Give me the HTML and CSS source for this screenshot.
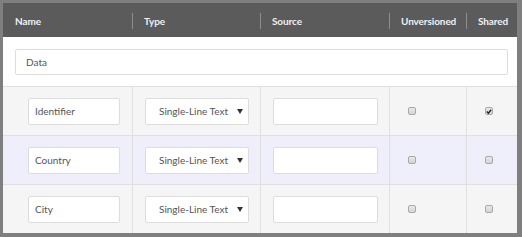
FILE: index.html
```html
<!DOCTYPE html>
<html>
<head>
    <title>Template Fields</title>
    <link rel="stylesheet" href="styles.css">
</head>
<body>
    <div class="fields">
        <div class="head">
            <div class="th">Name</div>
            <div class="th"><span class="sep"></span>Type</div>
            <div class="th"><span class="sep"></span>Source</div>
            <div class="th"><span class="sep"></span>Unversioned</div>
            <div class="th"><span class="sep"></span>Shared</div>
        </div>

        <div class="section">
            <input type="text" class="box section-name" value="Data">
        </div>

        <div class="row">
            <div class="td name"><input type="text" class="box" value="Identifier"></div>
            <div class="td"><div class="box select">Single-Line Text<span class="arrow"></span></div></div>
            <div class="td"><input type="text" class="box" value=""></div>
            <div class="td check"><span class="cb"></span></div>
            <div class="td check"><span class="cb checked"><svg width="7" height="7" viewBox="0 0 7 7"><path d="M1 3.6 L2.8 5.4 L6 1.4" fill="none" stroke="#222" stroke-width="1.6"/></svg></span></div>
        </div>

        <div class="row alt">
            <div class="td name"><input type="text" class="box" value="Country"></div>
            <div class="td"><div class="box select">Single-Line Text<span class="arrow"></span></div></div>
            <div class="td"><input type="text" class="box" value=""></div>
            <div class="td check"><span class="cb"></span></div>
            <div class="td check"><span class="cb"></span></div>
        </div>

        <div class="row">
            <div class="td name"><input type="text" class="box" value="City"></div>
            <div class="td"><div class="box select">Single-Line Text<span class="arrow"></span></div></div>
            <div class="td"><input type="text" class="box" value=""></div>
            <div class="td check"><span class="cb"></span></div>
            <div class="td check"><span class="cb"></span></div>
        </div>
    </div>
</body>
</html>
```

FILE: styles.css
```css
html, body {margin:0;padding:0;}
body {font-family:Lato,"Open Sans",sans-serif;font-size:10px;color:#555;background:#7f7f7f;}

.fields {width:514px;height:230px;border-style:solid;border-color:#7f7f7f;border-width:3px 5px 4px 3px;background:#f5f5f5;overflow:hidden;}

/* header */
.head, .row {display:grid;grid-template-columns:129px 128px 129px 77px 51px;}
.head {height:34px;background:#5b5b5b;}
.th {display:flex;align-items:center;padding:2px 0 0 12px;color:#eef0f2;font-weight:700;font-size:10px;letter-spacing:-0.1px;white-space:nowrap;}
.th .sep {width:1px;height:16px;background:#8e8e8e;margin:0 11px 0 -12px;}

/* section name */
.section {background:#fff;padding:12px 9px 11px 12px;height:26px;}
.box {box-sizing:border-box;height:27px;border:1px solid #ddd;border-radius:2px;background:#fff;font-family:inherit;font-size:10px;color:#555;padding:0 6px;outline:none;}
.section-name {width:493px;height:26px;padding:0 10px;}

/* rows */
.row {height:48px;border-top:1px solid #e0e0e0;}
.row.alt {background:#efeffc;}
.td {display:flex;align-items:center;padding-left:12px;border-left:1px solid #e0e0e0;}
.td:first-child {border-left:none;}
.td.name {padding-left:25px;}
.td.name .box {width:92px;}
.td .box {width:105px;}
.select {display:flex;align-items:center;justify-content:space-between;padding:0 5px 0 13px;width:104px !important;white-space:nowrap;}
.arrow {width:0;height:0;border-left:3px solid transparent;border-right:3px solid transparent;border-top:5px solid #333;}

/* checkboxes */
.td.check {padding-left:18px;}
.cb {display:flex;align-items:center;justify-content:center;box-sizing:border-box;width:8px;height:8px;border:1px solid #a9a9a9;border-radius:2px;background:linear-gradient(#e9e9e9,#d4d4d4);}
.cb svg {display:block;}
```
